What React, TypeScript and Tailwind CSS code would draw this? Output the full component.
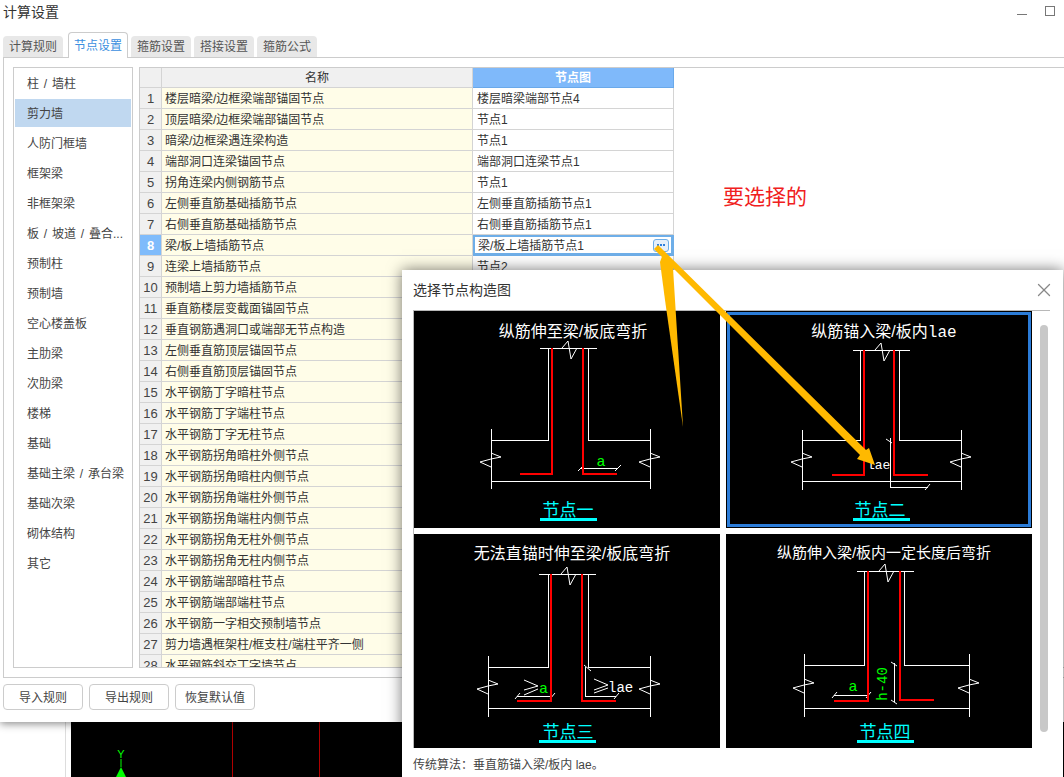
import React from 'react';
import { X } from 'lucide-react';

const sideItems = ['柱 / 墙柱', '剪力墙', '人防门框墙', '框架梁', '非框架梁', '板 / 坡道 / 叠合...', '预制柱', '预制墙', '空心楼盖板', '主肋梁', '次肋梁', '楼梯', '基础', '基础主梁 / 承台梁', '基础次梁', '砌体结构', '其它'];

const rows: [string, string][] = [
  ['楼层暗梁/边框梁端部锚固节点', '楼层暗梁端部节点4'],
  ['顶层暗梁/边框梁端部锚固节点', '节点1'],
  ['暗梁/边框梁遇连梁构造', '节点1'],
  ['端部洞口连梁锚固节点', '端部洞口连梁节点1'],
  ['拐角连梁内侧钢筋节点', '节点1'],
  ['左侧垂直筋基础插筋节点', '左侧垂直筋插筋节点1'],
  ['右侧垂直筋基础插筋节点', '右侧垂直筋插筋节点1'],
  ['梁/板上墙插筋节点', '梁/板上墙插筋节点1'],
  ['连梁上墙插筋节点', '节点2'],
  ['预制墙上剪力墙插筋节点', '节点1'],
  ['垂直筋楼层变截面锚固节点', '节点1'],
  ['垂直钢筋遇洞口或端部无节点构造', '节点1'],
  ['左侧垂直筋顶层锚固节点', '节点1'],
  ['右侧垂直筋顶层锚固节点', '节点1'],
  ['水平钢筋丁字暗柱节点', '节点1'],
  ['水平钢筋丁字端柱节点', '节点1'],
  ['水平钢筋丁字无柱节点', '节点1'],
  ['水平钢筋拐角暗柱外侧节点', '节点1'],
  ['水平钢筋拐角暗柱内侧节点', '节点1'],
  ['水平钢筋拐角端柱外侧节点', '节点1'],
  ['水平钢筋拐角端柱内侧节点', '节点1'],
  ['水平钢筋拐角无柱外侧节点', '节点1'],
  ['水平钢筋拐角无柱内侧节点', '节点1'],
  ['水平钢筋端部暗柱节点', '节点1'],
  ['水平钢筋端部端柱节点', '节点1'],
  ['水平钢筋一字相交预制墙节点', '节点1'],
  ['剪力墙遇框架柱/框支柱/端柱平齐一侧', '节点1'],
  ['水平钢筋斜交丁字墙节点', '节点1'],
];

const Tab = ({ label, active }: { label: string; active?: boolean }) =>
  active ? (
    <div className="relative z-10 -mb-px flex h-[26px] w-[60px] items-center justify-center rounded-t-[4px] border border-b-0 border-[#ccc] bg-white text-xs text-[#3b8fe0]">{label}</div>
  ) : (
    <div className="flex h-[21px] w-[60px] items-center justify-center rounded-t-[4px] bg-[#e8e8e8] text-xs text-[#555]">{label}</div>
  );

const FootButton = ({ label }: { label: string }) => (
  <button className="h-[26px] w-[80px] rounded-[4px] border border-[#ccc] bg-white pt-px text-xs text-[#444]">{label}</button>
);

interface DiagramProps {
  box: string;
  title: React.ReactNode;
  titleX: number;
  titleY: number;
  titleSize: string;
  label: string;
  labelX: number;
  labelY: number;
  underY: number;
  topY: number;
  topX: number;
  wallL: number;
  wallR: number;
  redL: number;
  redR: number;
  shoulder: number;
  edgeL: number;
  edgeR: number;
  edgeT: number;
  edgeB: number;
  bottom: number;
  breakY: number;
  redLY: number;
  redRY: number;
  redLX: number;
  redRX: number;
  children?: React.ReactNode;
}

const breakPts = (x: number, y: number) => `${x},${y - 4} ${x + 10},${y} ${x},${y + 2} ${x - 11},${y + 5} ${x},${y + 10}`;

const Diagram = (p: DiagramProps) => (
  <svg viewBox={p.box} className="block h-full w-full">
    <text x={p.titleX} y={p.titleY} textAnchor="middle" className={`fill-white ${p.titleSize}`}>{p.title}</text>
    <g className="fill-none stroke-white [shape-rendering:crispEdges]">
      <path d={`M${p.topX} ${p.topY}H${p.topX + 57}M${p.wallL} ${p.topY}V${p.shoulder}H${p.edgeL}M${p.wallR} ${p.topY}V${p.shoulder}H${p.edgeR}`} />
      <path d={`M${p.edgeL} ${p.edgeT}V${p.edgeB}M${p.edgeR} ${p.edgeT}V${p.edgeB}M${p.edgeL} ${p.bottom}H${p.edgeR}`} />
    </g>
    <g className="fill-none stroke-white">
      <polyline points={`${p.topX + 22},${p.topY} ${p.topX + 28},${p.topY - 7} ${p.topX + 31},${p.topY + 11} ${p.topX + 37},${p.topY}`} />
      <polyline points={breakPts(p.edgeL, p.breakY)} />
      <polyline points={breakPts(p.edgeR, p.breakY)} />
    </g>
    {p.children}
    <g className="fill-none stroke-[#ff0000] stroke-2 [shape-rendering:crispEdges]">
      <path d={`M${p.redL} ${p.topY}V${p.redLY}H${p.redLX}`} />
      <path d={`M${p.redR} ${p.topY}V${p.redRY}H${p.redRX}`} />
    </g>
    <text x={p.labelX} y={p.labelY} textAnchor="middle" className="fill-[#00ffff] text-[17px]">{p.label}</text>
    <rect x={p.topX} y={p.underY} width="57" height="3" className="fill-[#00ffff]" />
  </svg>
);

export default function App() {
  return (
    <div className="relative h-[777px] w-[1064px] overflow-hidden bg-white [font-family:'Liberation_Sans','Noto_Sans_CJK_SC',sans-serif]">
      {/* main settings window */}
      <div className="relative z-10 flex h-[722px] flex-col bg-white shadow-[0_2px_8px_rgba(0,0,0,0.45)]">
        <div className="flex h-[25px] items-center justify-between pl-[3px] pr-[9px] text-sm text-[#333]">
          <span className="-mt-px">计算设置</span>
          <div className="flex items-center gap-[18px]">
            <div className="mt-[4px] h-px w-[10px] bg-[#777]" />
            <div className="-mt-[4px] h-[10px] w-[10px] border border-[#777]" />
          </div>
        </div>
        <div className="flex h-[32px] items-end gap-[3px] pl-[3px]">
          <Tab label="计算规则" />
          <div className="ml-[2px]"><Tab label="节点设置" active /></div>
          <Tab label="箍筋设置" />
          <Tab label="搭接设置" />
          <Tab label="箍筋公式" />
        </div>
        <div className="ml-[3px] flex h-[621px] gap-[6px] border border-r-0 border-[#ccc] py-[9px] pl-[9px]">
          <div className="flex h-[601px] w-[120px] flex-col gap-[2px] border border-[#ccc] px-px pt-px">
            {sideItems.map((s, i) => (
              <div key={s} className={`flex h-[28px] shrink-0 items-center whitespace-nowrap pl-3 pt-px text-xs text-[#444] [word-spacing:1.5px] ${i === 1 ? 'bg-[#c0d8f0]' : ''}`}>
                <span>{s}</span>
              </div>
            ))}
          </div>
          <div className="h-[601px] flex-1 overflow-hidden border-y border-l border-[#ccc]">
            <table className="w-[534px] table-fixed border-separate border-spacing-0 text-xs text-[#333]">
              <colgroup>
                <col className="w-[22px]" />
                <col className="w-[311px]" />
                <col className="w-[201px]" />
              </colgroup>
              <thead>
                <tr>
                  <th className="h-[20px] border-b border-r border-[#d4d4d4] bg-[#f0f0f0]" />
                  <th className="h-[20px] border-b border-r border-[#d4d4d4] bg-[#f0f0f0] p-0 pt-px font-normal">名称</th>
                  <th className="h-[20px] border-b border-r border-[#6aa9ea] bg-[#7fb9fa] p-0 pt-px font-bold text-white">节点图</th>
                </tr>
              </thead>
              <tbody>
                {rows.map(([name, node], i) => (
                  <tr key={name}>
                    <td className={`h-[21px] border-b border-r border-[#d4d4d4] p-0 pt-px text-center text-[13px] ${i === 7 ? 'bg-[#7fbbfb] font-bold text-white' : 'bg-[#f0f0f0] text-[#444]'}`}>{i + 1}</td>
                    <td className="h-[21px] truncate border-b border-r border-[#d4d4d4] bg-[#fffde8] p-0 pl-[3px] pt-px">{name}</td>
                    {i === 7 ? (
                      <td className="h-[21px] border-b border-r border-[#6eaee8] p-0 shadow-[inset_0_0_0_2px_#6eaee8]">
                        <div className="flex items-center justify-between pl-[5px] pr-[4px]">
                          <span className="pt-px">{node}</span>
                          <span className="flex h-[13px] w-[16px] items-center justify-center gap-px rounded-[3px] border border-[#6eaee8] bg-[#e6effa]">
                            <span className="h-[2px] w-[2px] bg-[#2f7fdc]" />
                            <span className="h-[2px] w-[2px] bg-[#2f7fdc]" />
                            <span className="h-[2px] w-[2px] bg-[#2f7fdc]" />
                          </span>
                        </div>
                      </td>
                    ) : (
                      <td className="h-[21px] truncate border-b border-r border-[#d4d4d4] p-0 pl-1 pt-px">{node}</td>
                    )}
                  </tr>
                ))}
              </tbody>
            </table>
          </div>
        </div>
        <div className="flex gap-[6px] pl-[3px] pt-[6px]">
          <FootButton label="导入规则" />
          <FootButton label="导出规则" />
          <FootButton label="恢复默认值" />
        </div>
      </div>

      {/* drawing area peeking out under the window */}
      <div className="flex h-[55px]">
        <div className="w-[66px] border-r border-[#ddd] bg-white" />
        <div className="w-[5px] bg-white" />
        <div className="relative flex-1 bg-black">
          <div className="absolute left-[161px] top-0 h-full w-px bg-[#b00000]" />
          <div className="absolute left-[248px] top-0 h-full w-px bg-[#b00000]" />
          <svg viewBox="0 0 20 30" className="absolute left-[40px] top-[25px] h-[30px] w-[20px]">
            <text x="10" y="11" textAnchor="middle" className="fill-[#00ff00] text-[11px]">Y</text>
            <path d="M10 12V20" className="stroke-[#00ff00]" />
            <path d="M10 20L5 30H15Z" className="fill-[#00ff00]" />
          </svg>
        </div>
      </div>

      {/* node picker dialog */}
      <div className="absolute left-[402px] top-[270px] z-20 h-[520px] w-[661px] bg-white shadow-[0_0_14px_rgba(0,0,0,0.55)]">
        <div className="flex h-[40px] items-center justify-between pl-[11px] pr-[8px] text-sm text-[#333]">
          <span>选择节点构造图</span>
          <X size={22} strokeWidth={1.4} className="text-[#888]" />
        </div>
        <div className="flex">
          <div className="ml-[11px] w-[637px] border-l border-t border-[#b8b8b8]">
            <div className="grid grid-cols-[306px_306px] grid-rows-[217px_214px] gap-x-[6px] gap-y-[6px]">
              <div className="bg-black">
                <Diagram box="414 311 306 217" title="纵筋伸至梁/板底弯折" titleX={573} titleY={337} titleSize="text-[16px]" label="节点一" labelX={568} labelY={516} underY={518} topY={348} topX={540} wallL={548} wallR={588} redL={552} redR={583} shoulder={440} edgeL={491} edgeR={650} edgeT={429} edgeB={489} bottom={481} breakY={457} redLY={474} redRY={474} redLX={520} redRX={617}>
                  <path d="M581 468H618" className="stroke-white [shape-rendering:crispEdges]" />
                  <path d="M578 471L584 465M615 471L621 465" className="stroke-white" />
                  <text x="601" y="466" textAnchor="middle" className="fill-[#00ff00] text-[15px] [font-family:'Liberation_Mono',monospace]">a</text>
                </Diagram>
              </div>
              <div className="bg-black shadow-[inset_0_0_0_1px_#000,inset_0_0_0_4px_#2b7cd8]">
                <Diagram box="726 311 306 217" title={<>纵筋锚入梁/板内<tspan className="[font-family:'Liberation_Mono',monospace]">lae</tspan></>} titleX={884} titleY={337} titleSize="text-[16px]" label="节点二" labelX={880} labelY={516} underY={518} topY={350} topX={853} wallL={860} wallR={899} redL={864} redR={894} shoulder={440} edgeL={802} edgeR={961} edgeT={430} edgeB={490} bottom={481} breakY={457} redLY={475} redRY={475} redLX={832} redRX={928}>
                  <path d="M890 438V487H928" className="fill-none stroke-white [shape-rendering:crispEdges]" />
                  <path d="M886 439L892 443M925 490L930 484" className="stroke-white" />
                  <text x="867" y="469" className="fill-white text-[13px] [font-family:'Liberation_Mono',monospace]">lae</text>
                </Diagram>
              </div>
              <div className="bg-black">
                <Diagram box="414 534 306 214" title="无法直锚时伸至梁/板底弯折" titleX={572} titleY={559} titleSize="text-[16px]" label="节点三" labelX={568} labelY={738} underY={740} topY={574} topX={539} wallL={548} wallR={588} redL={551} redR={582} shoulder={667} edgeL={488} edgeR={650} edgeT={656} edgeB={717} bottom={708} breakY={684} redLY={701} redRY={701} redLX={517} redRX={616}>
                  <path d="M517 696H552M585 667V696H616" className="fill-none stroke-white [shape-rendering:crispEdges]" />
                  <path d="M515 699L520 693M550 699L555 693M584 665L591 671M614 699L619 693" className="stroke-white" />
                  <path d="M524 680L538 686L524 690M538 689L524 695M594 679L608 685L594 690M608 688L594 693" className="fill-none stroke-white" />
                  <text x="539" y="693" className="fill-[#00ff00] text-[15px] [font-family:'Liberation_Mono',monospace]">a</text>
                  <text x="608" y="692" className="fill-white text-[14px] [font-family:'Liberation_Mono',monospace]">lae</text>
                </Diagram>
              </div>
              <div className="bg-black">
                <Diagram box="726 534 306 214" title="纵筋伸入梁/板内一定长度后弯折" titleX={884} titleY={558} titleSize="text-[15px]" label="节点四" labelX={885} labelY={738} underY={740} topY={571} topX={857} wallL={864} wallR={904} redL={868} redR={900} shoulder={665} edgeL={804} edgeR={969} edgeT={654} edgeB={717} bottom={708} breakY={683} redLY={701} redRY={700} redLX={834} redRX={934}>
                  <path d="M834 695H868M894 663V702" className="fill-none stroke-white [shape-rendering:crispEdges]" />
                  <path d="M832 698L837 692M866 698L871 692M891 662L897 666M891 700L897 704" className="stroke-white" />
                  <text x="853" y="691" textAnchor="middle" className="fill-[#00ff00] text-[15px] [font-family:'Liberation_Mono',monospace]">a</text>
                  <text transform="translate(887 684) rotate(-90)" textAnchor="middle" className="fill-[#00ff00] text-[14px] [font-family:'Liberation_Mono',monospace]">h-40</text>
                </Diagram>
              </div>
            </div>
          </div>
          <div className="ml-[-11px] mt-[15px] h-[407px] w-[8px] translate-x-[1px] rounded-full bg-[#c8c8c8]" />
        </div>
        <div className="pl-[11px] pt-[9px] text-xs text-[#444]">传统算法：垂直筋锚入梁/板内 lae。</div>
      </div>

      {/* hand-drawn annotation on top of everything */}
      <span className="absolute left-[723px] top-[183px] z-30 text-[21px] leading-[28px] text-[#f02020]">要选择的</span>
      <svg viewBox="0 0 1064 777" className="pointer-events-none absolute left-0 top-0 z-30 h-[777px] w-[1064px]">
        <polygon points="683,427 673,268 672,262 664,251 660,262 665,300" className="fill-[#ffb900]" />
        <polygon points="658,245 866,450 869,448 875,465 857,459 860,455 654,249" className="fill-[#ffb900]" />
      </svg>
    </div>
  );
}
